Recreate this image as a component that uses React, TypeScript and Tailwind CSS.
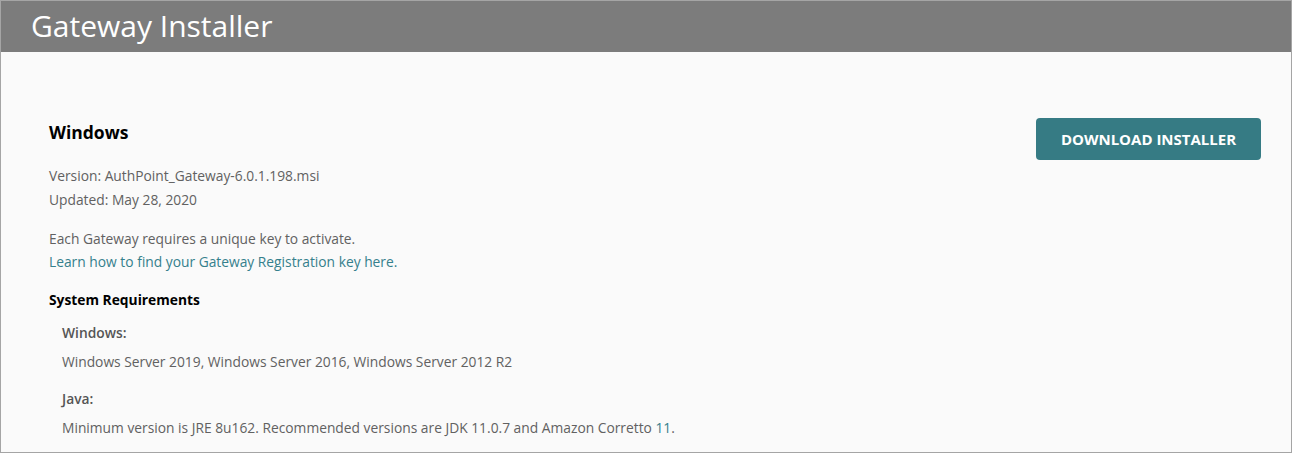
import React from 'react'

const App = () => {
  return (
    <div
      className="w-[1292px] h-[453px] border border-[#a5a5a5] bg-[#fafafa] overflow-hidden"
      style={{ fontFamily: '"Open Sans", "Liberation Sans", sans-serif' }}>
      <div className="h-[51px] bg-[#7c7c7c] pl-[30px] flex items-center">
        <h1 className="text-[30px] text-white leading-none pb-[1px]">Gateway Installer</h1>
      </div>
      <div className="flex justify-between pl-[48px] pr-[30px] pt-[66px]">
        <div>
          <h2 className="text-[17.5px] font-bold text-black leading-[28px]">Windows</h2>
          <div className="mt-[18px] text-[13.8px] text-[#616161] leading-[24px]">
            <p>Version: AuthPoint_Gateway-6.0.1.198.msi</p>
            <p>Updated: May 28, 2020</p>
          </div>
          <div className="mt-[15px] text-[13.8px] text-[#616161] leading-[23px]">
            <p>Each Gateway requires a unique key to activate.</p>
            <a href="#" className="text-[#35808c]">
              Learn how to find your Gateway Registration key here.
            </a>
          </div>
          <h3 className="mt-[15px] text-[13.8px] font-bold text-black leading-[24px]">
            System Requirements
          </h3>
          <div className="pl-[13px] text-[13.8px] text-[#616161]">
            <p className="mt-[9px] font-semibold text-[#555] leading-[24px]">Windows:</p>
            <p className="mt-[5px] leading-[24px]">
              Windows Server 2019, Windows Server 2016, Windows Server 2012 R2
            </p>
            <p className="mt-[13px] font-semibold text-[#555] leading-[24px]">Java:</p>
            <p className="mt-[5px] leading-[24px]">
              Minimum version is JRE 8u162. Recommended versions are JDK 11.0.7 and Amazon
              Corretto <span className="text-[#35808c]">11</span>.
            </p>
          </div>
        </div>
        <div>
          <button className="w-[225px] h-[42px] rounded-[4px] bg-[#367b84] text-white text-[15px] font-bold">
            DOWNLOAD INSTALLER
          </button>
        </div>
      </div>
    </div>
  )
}

export default App
